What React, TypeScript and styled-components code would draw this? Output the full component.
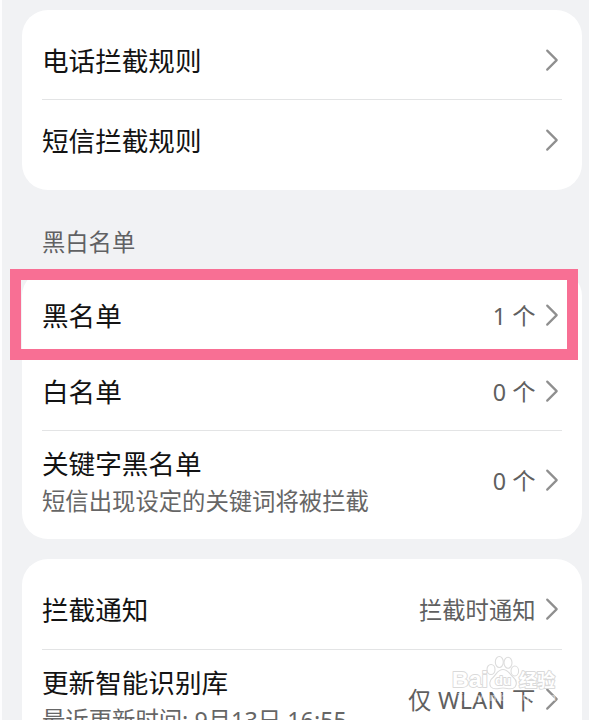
import React from 'react';
import styled, { createGlobalStyle } from 'styled-components';

const Global = createGlobalStyle`
  * { box-sizing: border-box; }
  html, body { margin: 0; height: 720px; overflow: hidden; background: #f1f2f4; }
  body { font-family: "Noto Sans", "Noto Sans CJK SC", sans-serif; color: #131313; }
`;

const Screen = styled.main`
  position: relative;
  width: 589px;
  height: 720px;
  overflow: hidden;
  padding: 10px 7px 0 20px;
  border-left: 2px solid #fdfdfe;
  background: #f1f2f4;
`;

const Card = styled.section<{ $gap?: number }>`
  width: 560px;
  margin-top: ${p => p.$gap ?? 0}px;
  padding: 0 20px;
  border-radius: 26px;
  background: #fff;
`;

const Row = styled.div<{ $height: number; $top: number; $divided?: boolean }>`
  display: flex;
  justify-content: space-between;
  height: ${p => p.$height}px;
  padding-top: ${p => p.$top}px;
  border-bottom: ${p => (p.$divided ? '1px solid #e3e4e5' : 'none')};
`;

const Labels = styled.div`
  display: flex;
  flex-direction: column;
`;

const Title = styled.span`
  height: 40px;
  line-height: 40px;
  font-size: 26.6px;
  white-space: nowrap;
`;

const Detail = styled.span`
  height: 34px;
  line-height: 34px;
  font-size: 23.35px;
  color: #666;
  white-space: nowrap;
`;

const Side = styled.div<{ $drop: number }>`
  display: flex;
  align-items: center;
  height: 40px;
  margin-top: ${p => p.$drop}px;
  padding-right: 3px;
  gap: 9.5px;
`;

const Value = styled.span<{ $tracking: number }>`
  font-size: 23.3px;
  line-height: 40px;
  letter-spacing: ${p => p.$tracking}px;
  color: #606060;
  white-space: nowrap;
`;

const Heading = styled.h2`
  height: 80px;
  margin: 0;
  padding: 33px 0 0 20px;
  font-size: 23.3px;
  font-weight: 400;
  line-height: 38px;
  color: #606163;
`;

const Highlight = styled.div`
  position: absolute;
  left: 8px;
  top: 269px;
  width: 568px;
  height: 91px;
  border: 11px solid #f86f94;
`;

const Watermark = styled.svg`
  position: absolute;
  left: 446px;
  top: 652px;
`;

const ChevronIcon = styled.svg`
  flex: none;
  margin-top: -3px;
`;

const Chevron = () => (
  <ChevronIcon width="14" height="24" viewBox="0 0 14 24" fill="none">
    <path d="M2.2 2.6 11.7 12.1 2.2 21.6" stroke="#8f8f8f" strokeWidth="2.2" strokeLinecap="round" strokeLinejoin="round" />
  </ChevronIcon>
);

type ItemProps = {
  title: string; height: number; top: number; detail?: string; value?: string;
  tracking?: number; drop?: number; divided?: boolean;
};

const Item = ({ title, height, top, detail, value, tracking = 0, drop = 0, divided }: ItemProps) => (
  <Row $height={height} $top={top} $divided={divided}>
    <Labels>
      <Title>{title}</Title>
      {detail && <Detail>{detail}</Detail>}
    </Labels>
    <Side $drop={drop}>
      {value && <Value $tracking={tracking}>{value}</Value>}
      <Chevron />
    </Side>
  </Row>
);

export default function App() {
  return (
    <>
      <Global />
      <Screen>
        <Card>
          <Item title="电话拦截规则" height={90} top={31} divided />
          <Item title="短信拦截规则" height={90} top={21} />
        </Card>
        <Heading>黑白名单</Heading>
        <Card>
          <Item title="黑名单" value="1 个" height={85} top={26} divided />
          <Item title="白名单" value="0 个" height={76} top={17} divided />
          <Item title="关键字黑名单" detail="短信出现设定的关键词将被拦截" value="0 个" height={108} top={13} drop={17} />
        </Card>
        <Card $gap={20}>
          <Item title="拦截通知" value="拦截时通知" height={91} top={31} divided />
          <Item title="更新智能识别库" detail="最近更新时间: 9月13日 16:55" value="仅 WLAN 下" tracking={0.3} height={110} top={13} drop={17} />
        </Card>
        <Highlight />
        <Watermark width="114" height="54" viewBox="0 0 114 54">
          <g fill="#fff" fillOpacity="0.55" stroke="#dcdcdc" strokeWidth="1.1">
            <ellipse cx="43" cy="17.5" rx="4" ry="5" />
            <ellipse cx="51.3" cy="10" rx="4" ry="5.5" />
            <ellipse cx="60" cy="10.7" rx="4" ry="5.5" />
            <ellipse cx="66.8" cy="19" rx="3.8" ry="5" />
            <path d="M55 17.5c-5 0-6 4-9.500 7.500-4 3-4.500 7.500-2.500 10 3 3.500 7.500 1 12 1s9 2.500 12-1c2-3 1.500-7-2-10-4-3.500-5-7.500-10-7.500z" />
          </g>
          <g fontFamily="Liberation Sans" fontWeight="700" fill="#fff" stroke="#dadada" strokeWidth="1.8" strokeLinejoin="round" paintOrder="stroke">
            <text x="4" y="35" fontSize="22" textLength="36" lengthAdjust="spacingAndGlyphs">Bai</text>
            <text x="47" y="33" fontSize="13">du</text>
            <text x="71" y="34.500" fontFamily="Noto Sans CJK SC" fontSize="18" strokeWidth="2">经验</text>
          </g>
          <text x="9" y="48.500" fill="#fff" fillOpacity="0.55" fontFamily="Liberation Sans" fontSize="11.500" fontWeight="700" textLength="99">jingyan.baidu.com</text>
        </Watermark>
      </Screen>
    </>
  );
}
